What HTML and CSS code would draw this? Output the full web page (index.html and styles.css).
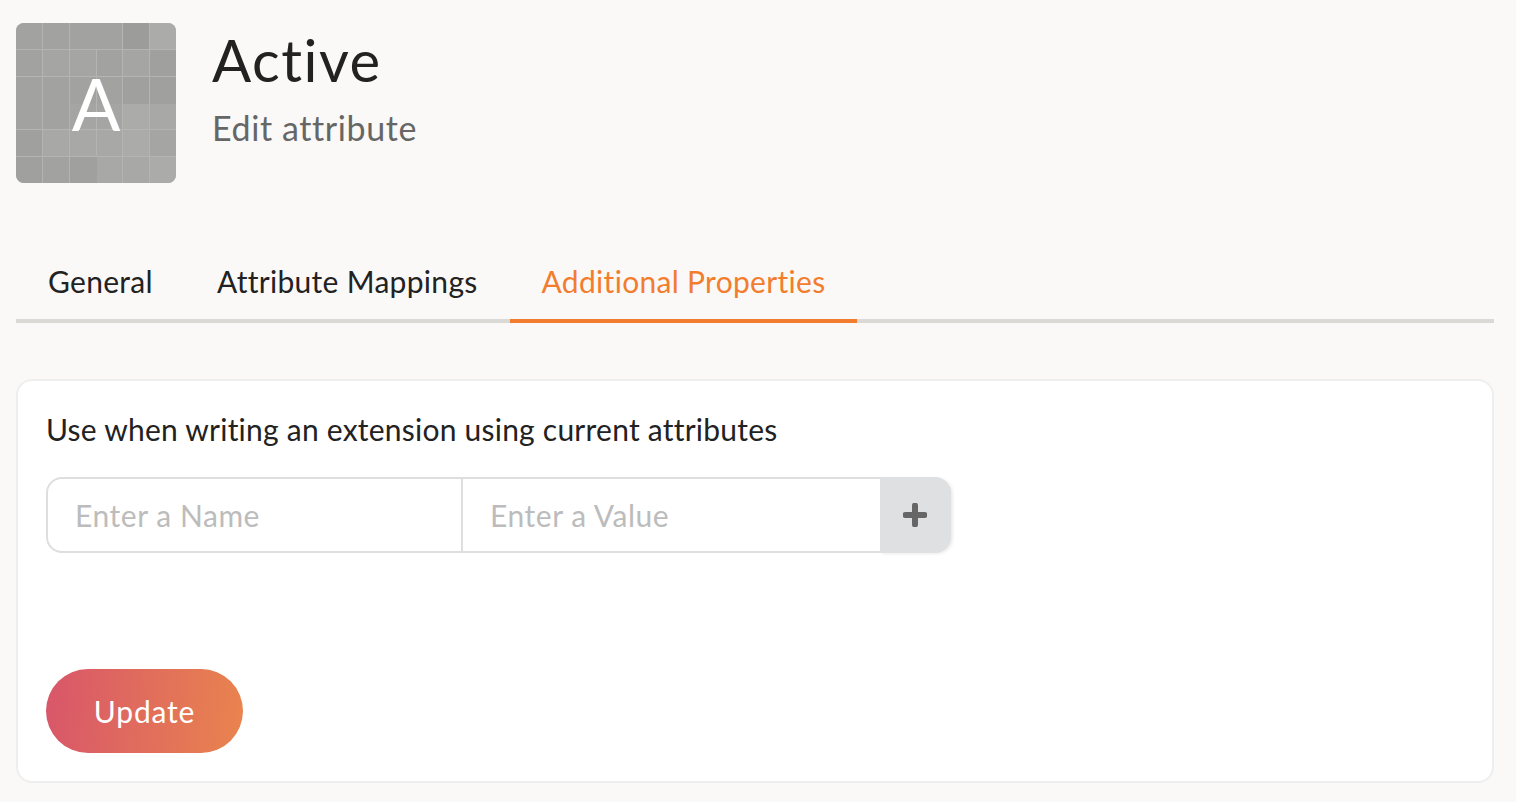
FILE: index.html
```html
<!DOCTYPE html>
<html lang="en">
<head>
<meta charset="utf-8">
<title>Active - Edit attribute</title>
<link rel="stylesheet" href="styles.css">
</head>
<body>
<header class="head">
  <div class="avatar">
    <div class="tiles">
      <i class="s3"></i><i class="s3"></i><i class="s3 join-r"></i><i class="s3"></i><i class="s1"></i><i class="s6"></i>
      <i class="s3"></i><i class="s4"></i><i class="s4"></i><i class="s3"></i><i class="s4"></i><i class="s2"></i>
      <i class="s3 join-b"></i><i class="s3 join-b"></i><i class="s3 join-b"></i><i class="s3 join-b"></i><i class="s2 join-b"></i><i class="s2 join-b"></i>
      <i class="s3"></i><i class="s3"></i><i class="s4"></i><i class="s4"></i><i class="s6"></i><i class="s5"></i>
      <i class="s2"></i><i class="s5"></i><i class="s5"></i><i class="s5"></i><i class="s6"></i><i class="s4"></i>
      <i class="s2"></i><i class="s3"></i><i class="s2 join-r"></i><i class="s5"></i><i class="s5"></i><i class="s6"></i>
    </div>
    <span class="letter">A</span>
  </div>
  <div class="titles">
    <h1>Active</h1>
    <p>Edit attribute</p>
  </div>
</header>
<nav class="tabs">
  <a class="tab">General</a>
  <a class="tab">Attribute Mappings</a>
  <a class="tab active">Additional Properties</a>
</nav>
<main class="card">
  <p class="hint">Use when writing an extension using current attributes</p>
  <div class="pair">
    <input class="field name" placeholder="Enter a Name">
    <input class="field value" placeholder="Enter a Value">
    <button class="add" aria-label="Add">
      <svg viewBox="0 0 24 24" width="24" height="24"><path d="M12 2.5v19M2.5 12h19" stroke="#666" stroke-width="6" stroke-linecap="round" fill="none"/></svg>
    </button>
  </div>
  <button class="update">Update</button>
</main>
</body>
</html>
```
FILE: styles.css
```css
* { box-sizing: border-box; }
html, body { height: 100%; }
body {
  margin: 0;
  padding: 23px 22px 0 16px;
  background: #faf9f7;
  color: #222;
  font-family: "Lato", "Liberation Sans", sans-serif;
  font-variant-ligatures: none;
  overflow: hidden;
}
.head { display: flex; gap: 36px; height: 160px; }
.avatar { position: relative; width: 160px; height: 160px; border-radius: 8px; overflow: hidden; background: #b4b4b2; }
.tiles { display: grid; grid-template-columns: repeat(6, 1fr); grid-template-rows: repeat(6, 1fr); gap: 1px; height: 100%; }
.tiles i { display: block; }
.tiles .join-b { margin-bottom: -1px; }
.tiles .join-r { margin-right: -1px; }
.s1 { background: #9c9c9b; }
.s2 { background: #a0a09f; }
.s3 { background: #a2a2a1; }
.s4 { background: #a5a5a4; }
.s5 { background: #a8a8a7; }
.s6 { background: #ababaa; }
.letter {
  position: absolute; inset: 0;
  display: flex; align-items: center; justify-content: center;
  color: #fff; font-size: 72px; font-weight: 400; line-height: 1;
}
.titles { padding-top: 4px; }
h1 { margin: 0; font-size: 58px; font-weight: 400; line-height: 66px; letter-spacing: 1.5px; color: #222; }
.titles p { margin: 13px 0 0; font-size: 34px; line-height: 44px; letter-spacing: .6px; color: #666; }
.tabs { display: flex; margin-top: 64px; height: 76px; border-bottom: 4px solid #dbd9d6; }
.tab { display: flex; align-items: center; height: 76px; padding: 0 32px 4px; font-size: 30px; letter-spacing: .3px; color: #222; border-bottom: 4px solid transparent; }
.tab.active { color: #f27d2e; border-bottom-color: #f27d2e; }
.card {
  margin-top: 56px; height: 404px;
  padding: 27px 28px 28px;
  background: #fff; border: 2px solid #eeeeee; border-radius: 16px;
}
.hint { margin: 0; font-size: 30px; line-height: 42px; letter-spacing: .23px; color: #222; }
.pair { display: flex; width: 905px; height: 76px; margin-top: 27px; }
.field {
  height: 76px; padding: 0 27px;
  border: 2px solid #dedede; outline: 0; background: #fff;
  font: 30px "Lato", "Liberation Sans", sans-serif; letter-spacing: .55px; color: #222;
  font-variant-ligatures: none;
}
.field::placeholder { color: #bcbcbc; opacity: 1; }
.name { width: 417px; border-radius: 16px 0 0 16px; }
.value { width: 419px; margin-left: -2px; border-right: 0; }
.add {
  flex: 1; display: flex; align-items: center; justify-content: center;
  border: 0; padding: 0 2px 0 0; background: #dfe0e2;
  border-radius: 0 16px 16px 0;
  box-shadow: 2px 1px 3px rgba(0,0,0,.08);
}
.update {
  display: block; width: 197px; height: 84px; margin-top: 116px;
  border: 0; border-radius: 42px;
  background: linear-gradient(95deg, #d8566a, #e9844e);
  color: #fff; font: 30px "Lato", "Liberation Sans", sans-serif; letter-spacing: .8px;
}
```
